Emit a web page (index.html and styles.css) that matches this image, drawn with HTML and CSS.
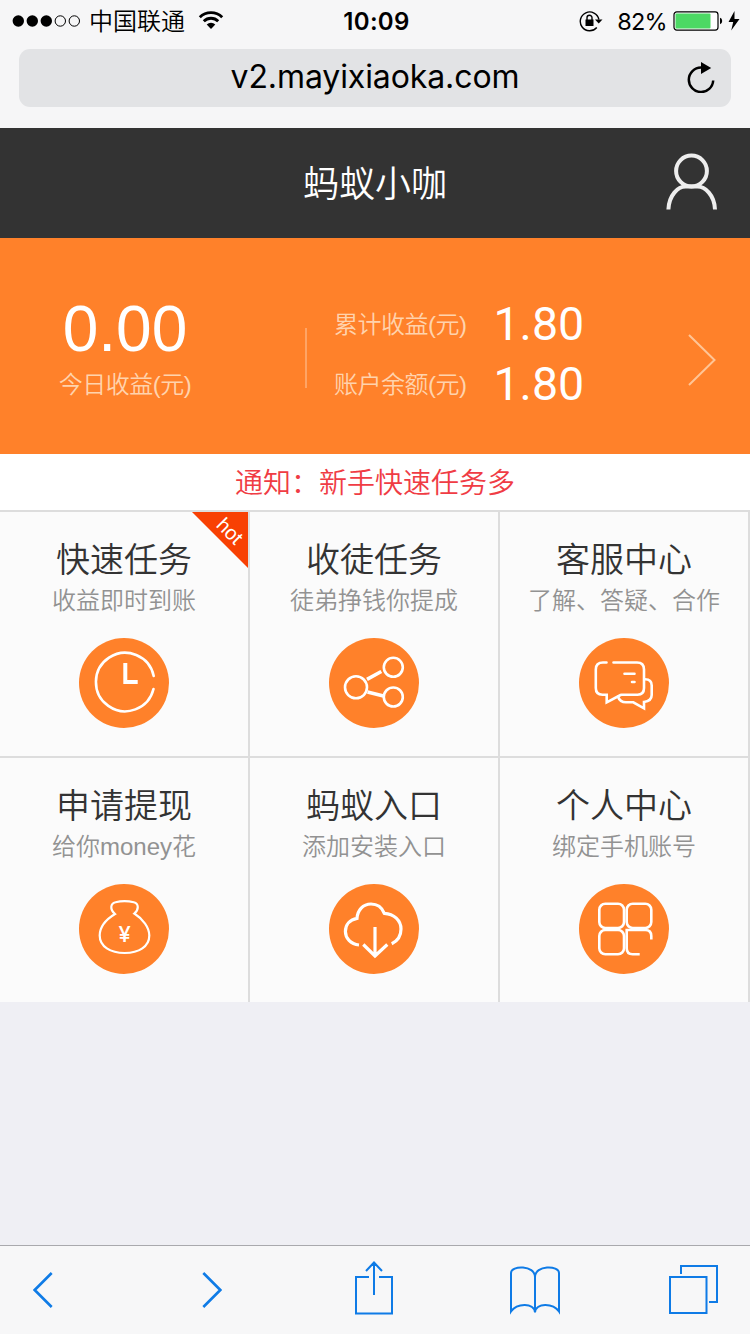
FILE: index.html
```html
<!DOCTYPE html>
<html lang="zh-CN">
<head>
  <meta charset="UTF-8">
  <meta name="viewport" content="width=device-width, initial-scale=1.0">
  <title>蚂蚁小咖</title>
  <link rel="stylesheet" href="styles.css">
</head>
<body>
  <div class="browser-top">
    <div class="status">
      <div class="status-left">
        <svg class="signal" width="70" height="14" viewBox="0 0 70 14">
          <circle cx="6.3" cy="7" r="5.7"/><circle cx="20.3" cy="7" r="5.7"/><circle cx="34.3" cy="7" r="5.7"/>
          <circle cx="48.3" cy="7" r="5.2" fill="none" stroke="#000"/><circle cx="62.3" cy="7" r="5.2" fill="none" stroke="#000"/>
        </svg>
        <span class="carrier">中国联通</span>
        <svg class="wifi" width="26" height="20" viewBox="0 0 26 20" fill="none" stroke="#000" stroke-width="2.9">
          <path d="M1.8 7.2a16 16 0 0 1 22.4 0M5.8 11.2a10.3 10.3 0 0 1 14.4 0"/>
          <path d="M13 19l-4.3-4.4a6.2 6.2 0 0 1 8.6 0z" fill="#000" stroke="none"/>
        </svg>
      </div>
      <span class="time">10:09</span>
      <div class="status-right">
        <svg width="24" height="22" viewBox="0 0 24 22">
          <path d="M17.8 17.5A9.4 9.4 0 1 1 19.9 9.5" fill="none" stroke="#000" stroke-width="1.4"/>
          <path d="M16 9.5h7.5l-3.8 4z"/>
          <rect x="6.5" y="9.5" width="8" height="6.5"/>
          <path d="M8 10V7.7a2.5 2.5 0 0 1 5 0V10" fill="none" stroke="#000" stroke-width="1.4"/>
        </svg>
        <span class="percent">82%</span>
        <svg width="68" height="20" viewBox="0 0 68 20">
          <rect x="1" y=".9" width="44" height="18.2" rx="2.8" fill="#fff" stroke="#000" stroke-width="1.2"/>
          <rect x="2.5" y="2.5" width="35" height="15" rx="1" fill="#4cd964"/>
          <path d="M47 6.7q2.2.4 2.2 3.3t-2.2 3.3z"/>
          <path d="M61.5 0L55.5 11h4.700l-2 8.600L66.500 8h-5z"/>
        </svg>
      </div>
    </div>
    <div class="address">
      <span class="url">v2.mayixiaoka.com</span>
      <svg class="reload" width="28" height="32" viewBox="0 0 28 32">
        <path d="M15 6.600h-1a12.200 12.200 0 1 0 12.200 12.900" fill="none" stroke="#000" stroke-width="2.500"/>
        <path d="M14 1l10.200 6L14 13z"/>
      </svg>
    </div>
  </div>

  <header class="header">
    <h1>蚂蚁小咖</h1>
    <svg class="user" width="54" height="58" viewBox="0 0 54 58" fill="none" stroke="#eee" stroke-width="4">
      <circle cx="26.500" cy="19" r="15.400"/>
      <path d="M3.400 57.500C4 43 13 34.600 20.500 34.600h12C40 34.600 49.500 43 50 57.500"/>
    </svg>
  </header>

  <section class="account">
    <div class="today">
      <strong>0.00</strong>
      <span>今日收益(元)</span>
    </div>
    <div class="totals">
      <div class="total"><span>累计收益(元)</span><b>1.80</b></div>
      <div class="total"><span>账户余额(元)</span><b>1.80</b></div>
    </div>
    <svg class="more" width="30" height="54" viewBox="0 0 30 54" fill="none" stroke="#ffc596" stroke-width="2">
      <path d="M2 2l25.500 25L2 52"/>
    </svg>
  </section>

  <div class="notice">通知：新手快速任务多</div>

  <main class="menu">
    <a class="item">
      <h2>快速任务</h2>
      <p>收益即时到账</p>
      <svg class="icon" viewBox="0 0 90 90">
        <path d="M74.700 38A29.200 29.200 0 1 0 74.500 51" stroke-linecap="round"/>
        <path d="M46.300 25v19h12.400" stroke-width="4"/>
      </svg>
      <span class="corner"><em>hot</em></span>
    </a>
    <a class="item">
      <h2>收徒任务</h2>
      <p>徒弟挣钱你提成</p>
      <svg class="icon" viewBox="0 0 90 90">
        <circle cx="27" cy="49.300" r="11"/>
        <circle cx="64.300" cy="29.300" r="9.500"/>
        <circle cx="64.300" cy="59" r="9.500"/>
        <path d="M38 41.300l14.300-7.800M38.500 54l16 4" stroke-width="3.600"/>
      </svg>
    </a>
    <a class="item">
      <h2>客服中心</h2>
      <p>了解、答疑、合作</p>
      <svg class="icon" viewBox="0 0 90 90" stroke-linecap="round">
        <path d="M27.500 24.500H24q-7.200 0-7.200 7V50q0 6.700 6.700 6.700h4.200v7.600L41.500 57l1-.3h16q6.500 0 6.500-6.700V31.500q0-7-7-7H34.500"/>
        <path d="M66 41.300q6.700 0 6.700 6.200V57q0 6-7.700 7v6.300l-10.700-6H47q-6 0-8-5.600"/>
        <path d="M45.500 35.700H55.500M53 44h2.500"/>
      </svg>
    </a>
    <a class="item">
      <h2>申请提现</h2>
      <p>给你money花</p>
      <svg class="icon" viewBox="0 0 90 90">
        <path d="M36 30C30.500 25 31.500 19.500 36.500 18.300q9-2.400 18.300 0C60 19.700 60 25.500 55.300 29.500 64 35 70.300 43.500 70.300 51.500 70.300 62.500 60 69 45.700 69S20.700 62.500 20.700 51.500C20.700 43.500 27 35.500 36 30z" stroke-width="2.200"/>
        <text class="yen" x="45.700" y="57.500">¥</text>
      </svg>
    </a>
    <a class="item">
      <h2>蚂蚁入口</h2>
      <p>添加安装入口</p>
      <svg class="icon" viewBox="0 0 90 90" stroke-width="3.200">
        <path d="M30 61C21.500 60 16.400 54 16.400 47.500 16.400 40.500 21 35.500 28 34.300 28.500 26 34 20 42 20c6.500 0 11 3.500 13.300 9.300C65 29.800 72 36.500 72 45c0 6.500-3.500 12-9.300 14.700"/>
        <path d="M46 43v29M34.300 60.500L46 72l12.300-11.500"/>
      </svg>
    </a>
    <a class="item">
      <h2>个人中心</h2>
      <p>绑定手机账号</p>
      <svg class="icon" viewBox="0 0 90 90">
        <rect x="20.300" y="19.700" width="24.700" height="24.300" rx="6"/>
        <rect x="47.700" y="19.700" width="24.600" height="24.300" rx="6"/>
        <rect x="20.300" y="46" width="24.700" height="24.300" rx="6"/>
        <path d="M72.300 55.500V52q0-6-6-6H47.700V64.300q0 6 6 6h7"/>
      </svg>
    </a>
  </main>

  <nav class="toolbar">
    <svg class="back" width="20" height="36" viewBox="0 0 20 36" stroke-width="2.600"><path d="M18.700 1L1.700 18l17 17"/></svg>
    <svg class="forward" width="20" height="36" viewBox="0 0 20 36" stroke-width="2.600"><path d="M1.300 1l17 17-17 17"/></svg>
    <svg class="share" width="40" height="54" viewBox="0 0 40 54"><path d="M15 16H2v36.500h36V16H25M20 34V2M12 10l8-8.500 8 8.500"/></svg>
    <svg class="book" width="52" height="50" viewBox="0 0 52 50"><path d="M26 47.500V12C26 0 2 0 2 8v38.500C8 38 25 37.500 26 47.500 27 37.500 44 38 50 46.500V8C50 0 26 0 26 12"/></svg>
    <svg class="tabs" width="50" height="50" viewBox="0 0 50 50"><path d="M1 13h36.500v36H1zM12 10V2h36v36h-8"/></svg>
  </nav>
</body>
</html>
```
FILE: styles.css
```css
* { box-sizing: border-box; margin: 0; padding: 0; }
body { width: 750px; height: 1334px; display: flex; flex-direction: column; overflow: hidden; background: #efeff4; font-family: "Liberation Sans", "Noto Sans CJK SC", sans-serif; font-weight: 350; }
svg { display: block; flex: none; }

.browser-top { height: 128px; background: #f6f6f7; font-family: Inter, "Noto Sans CJK SC", sans-serif; }
.status { height: 41px; display: grid; grid-template-columns: 1fr auto 1fr; align-items: center; padding: 0 9px 0 12px; }
.status-left, .status-right { display: flex; align-items: center; }
.status-right { justify-content: flex-end; }
.carrier { margin: 2px 13px 0 7px; font-size: 24px; line-height: 40px; }
.wifi { margin-top: -2px; }
.time { font-size: 24px; font-weight: 600; letter-spacing: 0.3px; }
.percent { margin: 0 6px 0 14px; font-size: 23.5px; font-weight: 400; letter-spacing: -0.7px; }
.address { display: flex; align-items: center; height: 58px; margin: 8px 19px 0; padding: 0 16px 2px 44px; background: #e2e3e5; border-radius: 11px; }
.url { flex: 1; text-align: center; font-size: 32px; font-weight: 400; line-height: 56px; letter-spacing: -0.1px; }

.header { display: flex; align-items: center; height: 110px; padding: 0 31px 4px 85px; background: #333; }
.header h1 { flex: 1; text-align: center; color: #fff; font-size: 36px; font-weight: 350; }

.account { display: flex; align-items: center; height: 216px; padding: 24px 33px 0 0; background: #ff812a; color: #ffd3ad; font-size: 24px; }
.account span { letter-spacing: -0.5px; }
.today { width: 250px; display: flex; flex-direction: column; align-items: center; padding-bottom: 19px; }
.today strong { color: #fff; font-size: 64px; line-height: 72px; font-weight: 400; }
.today span { line-height: 40px; }
.totals { position: relative; margin-left: 55px; padding: 0 0 9px 29px; }
.totals::before { content: ""; position: absolute; left: 0; top: 34px; width: 2px; height: 60px; background: #ffa465; }
.total { display: flex; align-items: center; height: 60px; }
.total span { padding-bottom: 2px; }
.total b { margin-left: 27px; color: #fff; font-family: Roboto, sans-serif; font-size: 46.5px; font-weight: 400; line-height: 60px; }
.more { margin: 4px 0 0 auto; }

.notice { height: 56px; padding-top: 2px; background: #fff; color: #f03c44; font-size: 28px; line-height: 56px; text-align: center; }

.menu { display: grid; grid-template-columns: repeat(3, 1fr); grid-auto-rows: 246px; height: 492px; overflow: hidden; }
.item { position: relative; display: flex; flex-direction: column; align-items: center; padding-top: 24px; background: #fbfbfb; border-top: 2px solid #ddd; border-right: 2px solid #ddd; }
.item h2 { color: #333; font-size: 34px; line-height: 48px; font-weight: 350; }
.item p { color: #929292; font-size: 24px; line-height: 34px; }
.icon { width: 90px; height: 90px; margin-top: 20px; border-radius: 50%; background: #ff812a; fill: none; stroke: #fff; }
.icon:not([stroke-width]) { stroke-width: 2.6; }
.yen { fill: #fff; stroke: none; font: 500 22px Inter, sans-serif; text-anchor: middle; }
.corner { position: absolute; top: 0; right: 0; width: 56px; height: 56px; background: #f84003; clip-path: polygon(0 0, 100% 0, 100% 100%); }
.corner em { display: block; width: 56px; color: #fff; font-size: 20px; line-height: 24px; font-style: normal; text-align: center; transform: translate(10px, 7px) rotate(45deg); }

.toolbar { display: flex; align-items: center; height: 89px; margin-top: auto; padding: 0 32px 0 33px; background: #f7f7f8; border-top: 1px solid #a9a9ad; fill: none; stroke: #0f7be6; stroke-width: 2; }
.forward { margin-left: 149px; }
.share { margin-left: 132px; margin-bottom: 4px; }
.book { margin-left: 115px; }
.tabs { margin: 0 0 2px 108px; }
```
